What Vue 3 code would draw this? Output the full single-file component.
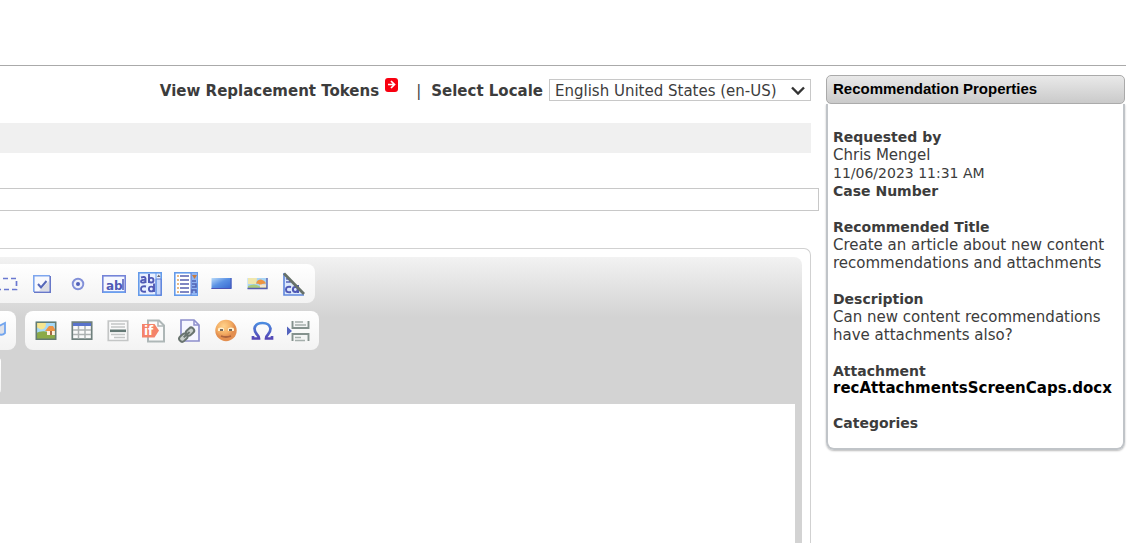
<script setup>
import { ref } from 'vue'

const locale = ref('en-US')
const title = ref('')
</script>

<template>
  <div class="page">
    <header class="masthead"></header>
    <div class="columns">
      <main class="article">
        <div class="topbar">
          <a class="tokens" href="#tokens">View Replacement Tokens</a>
          <svg class="go" viewBox="0 0 13 14" aria-hidden="true">
            <rect width="13" height="14" rx="3" fill="#f80010" />
            <path d="M3 6.500h6M6 3l3.500 3.500L6 10" fill="none" stroke="#fff" stroke-width="1.700" />
          </svg>
          <span class="bar">|</span>
          <label class="locale-label" for="locale">Select Locale</label>
          <div class="locale">
            <select id="locale" v-model="locale">
              <option value="en-US">English United States (en-US)</option>
            </select>
            <svg class="chevron" viewBox="0 0 14 9" aria-hidden="true">
              <path d="M1 1.500l6 6 6-6" fill="none" stroke="#333" stroke-width="2.400" />
            </svg>
          </div>
        </div>

        <div class="strip"></div>
        <input v-model="title" class="title-input" type="text" aria-label="Title" />

        <section class="editor">
          <div class="shell">
            <div class="toolbar">
              <div class="row">
                <div class="group group-forms">
                  <button type="button" aria-label="Form">
                    <svg viewBox="0 0 24 24"><path d="M1 6.500h21.500v11H1" fill="none" stroke="#6a78d0" stroke-width="1.700" stroke-dasharray="5 3" /></svg>
                  </button>
                  <button type="button" aria-label="Checkbox">
                    <svg viewBox="0 0 24 24">
                      <path d="M4 4h16v16H4z" fill="#f8f9fd" /><path d="M19 9v10H9z" fill="#dcdde2" />
                      <path d="M3.800 20V3.800H20" fill="none" stroke="#7ea6ee" stroke-width="1.600" />
                      <path d="M20.200 4v16.200H4" fill="none" stroke="#6878c8" stroke-width="1.600" />
                      <path d="M8 12l3 3.500L16.500 9" fill="none" stroke="#5567b8" stroke-width="2" />
                    </svg>
                  </button>
                  <button type="button" aria-label="Radio button">
                    <svg viewBox="0 0 24 24"><circle cx="12" cy="12" r="5.300" fill="#eef0fa" stroke="#8290d8" stroke-width="1.900" /><circle cx="12" cy="12" r="2" fill="#5060b8" /></svg>
                  </button>
                  <button type="button" aria-label="Text field">
                    <svg viewBox="0 0 24 24">
                      <rect x=".800" y="3.800" width="22.400" height="16.400" fill="#f6f8ff" stroke="#7484d8" stroke-width="1.600" />
                      <path d="M.800 20.200h22.400" stroke="#6aa0f0" stroke-width="1.600" />
                      <text class="glyph" x="4" y="17.500" font-size="12">ab</text><path d="M21 7v11" stroke="#4d58b8" stroke-width="1.500" />
                    </svg>
                  </button>
                  <button type="button" aria-label="Text area">
                    <svg viewBox="0 0 24 24">
                      <rect x=".800" y=".800" width="22.400" height="22.400" fill="#e9f0ff" stroke="#659bea" stroke-width="1.600" />
                      <path d="M18 7h5v16h-5z" fill="#c5d8fa" stroke="#5e78d4" /><path d="M18 1v22" stroke="#659bea" />
                      <path d="M19 5l1.700-2.500L22.500 5z" fill="#6a6a70" />
                      <g fill="none" stroke="#5059b5" stroke-width="1.900">
                        <path d="M3 5.500q4-1.500 4.500 1V11M7.500 8Q3 7.500 3 9.500t4.500.500" />
                        <path d="M11 2v9" /><circle cx="13.200" cy="8.200" r="2.300" />
                        <path d="M8 14.500q-5-1-5 2.500t5 2.500" />
                        <path d="M16 11.500V20" /><circle cx="13.300" cy="17" r="2.400" />
                      </g>
                    </svg>
                  </button>
                  <button type="button" aria-label="Selection field">
                    <svg viewBox="0 0 24 24">
                      <rect x=".800" y=".800" width="22.400" height="22.400" fill="#fff" stroke="#659bea" stroke-width="1.600" />
                      <path d="M17 1h6v22h-6z" fill="#8fb4f2" /><path d="M17 1v22" stroke="#5876cf" />
                      <path d="M3 4h2M3 8h2M3 12h2M3 16h2M3 20h2" stroke="#e0a35c" stroke-width="1.400" />
                      <path d="M6 4h9M6 8h9M6 12h9M6 16h9M6 20h9" stroke="#555fae" stroke-width="1.600" />
                      <path d="M18 3h5l-2.500 4z" fill="#c67a3d" /><path d="M18 9h4M18 12h4v3h-4M18 21v-3h4v3" fill="none" stroke="#5262b4" stroke-width="1.500" />
                    </svg>
                  </button>
                  <button type="button" aria-label="Button">
                    <svg viewBox="0 0 24 24">
                      <defs><linearGradient id="blueface" x1="0" y1="0" x2="1" y2="1"><stop stop-color="#b9dbfa" /><stop offset=".45" stop-color="#5a91e4" /><stop offset="1" stop-color="#3566d0" /></linearGradient></defs>
                      <path d="M1.500 6h20v11h-20z" fill="url(#blueface)" /><path d="M21 6v10.500H1.500" fill="none" stroke="#4b54b4" />
                    </svg>
                  </button>
                  <button type="button" aria-label="Image button">
                    <svg viewBox="0 0 24 24">
                      <path d="M1.500 6h20v11h-20z" fill="#a9d5f5" /><path d="M2 6h9l-1 6H2z" fill="#f0e7ad" />
                      <path d="M2 14q6-3 11 0t8-1v4H2z" fill="#a9cb7d" /><path d="M10 11.500q1-4 5-4 4 1 5 4l-4 .500-1 2-2-2z" fill="#ee9440" /><path d="M14 12.500h6v3h-6z" fill="#f7e5ca" />
                      <path d="M21 6v10.500H1.500" fill="none" stroke="#575cae" stroke-width="1.300" />
                    </svg>
                  </button>
                  <button type="button" aria-label="Hidden field">
                    <svg viewBox="0 0 24 24">
                      <path d="M2 1v22h20z" fill="#dce9fc" /><path d="M2 1v22h20" fill="none" stroke="#5f86dc" stroke-width="1.600" />
                      <path d="M4 7q4-1 4 3H4" fill="none" stroke="#5964b8" stroke-width="1.700" />
                      <g fill="none" stroke="#5059b5" stroke-width="2"><path d="M9 15q-5-1-5 2.500T9 20M16 13v8" /><circle cx="13.300" cy="17.500" r="2.400" /></g>
                      <path d="M2 1.500L22 22" stroke="#667069" stroke-width="2.800" />
                    </svg>
                  </button>
                </div>
              </div>

              <div class="row">
                <div class="group group-links">
                  <button type="button" aria-label="Anchor">
                    <svg viewBox="0 0 24 24"><path d="M10 5l6 2 6-3v10q-3 3-6 1l-6 2z" fill="#dfe1e8" stroke="#72a5ee" stroke-width="1.800" /></svg>
                  </button>
                </div>
                <div class="group">
                  <button type="button" aria-label="Image">
                    <svg viewBox="0 0 24 24">
                      <path d="M2 2.500h20v18H2z" fill="#a6daf8" /><path d="M2 14q7-4 20 1v5.500H2z" fill="#8baa48" /><path d="M3 3.500h9q0 7-5 7l-4-2z" fill="#f6e68f" />
                      <path d="M13 11h8v5h-8z" fill="#fff0dc" /><path d="M11 12l4-5h4l3 5z" fill="#ed9344" /><path d="M16 12h2v4h-2z" fill="#a46b45" />
                      <path d="M2.300 3.200h19.400v17H2.300z" fill="none" stroke="#647c72" stroke-width="1.600" />
                    </svg>
                  </button>
                  <button type="button" aria-label="Table">
                    <svg viewBox="0 0 24 24">
                      <path d="M2.300 3.200h19.400v17H2.300z" fill="#fafafa" stroke="#6f807d" stroke-width="1.700" /><path d="M3 4h18v3H3z" fill="#5973cc" />
                      <path d="M3 11h18M3 15.500h18M8.500 7v12.500M15 7v12.500" stroke="#adb2b2" stroke-width="1.500" />
                    </svg>
                  </button>
                  <button type="button" aria-label="Horizontal line">
                    <svg viewBox="0 0 24 24">
                      <path d="M2.300 2h19.400v19.500H2.300z" fill="#fafafa" stroke="#c4c6c6" stroke-width="1.700" /><path d="M5 5h14M5 8h14M5 15.500h14M8 18.500h11" stroke="#c4c6c6" stroke-width="1.400" />
                      <path d="M4 11.800h16" stroke="#647975" stroke-width="2.600" />
                    </svg>
                  </button>
                  <button type="button" aria-label="Condition">
                    <svg viewBox="0 0 24 24">
                      <path d="M6 1.500h11l5 5v16H6z" fill="#fafafa" stroke="#aeb7b7" stroke-width="2" /><path d="M16 2v5h6" fill="none" stroke="#aeb7b7" stroke-width="1.500" />
                      <path d="M0 5h12.500l4.500 6.500-4.500 7H0z" fill="#f4836a" /><text class="glyph-white" x="2" y="16" font-size="12">if</text>
                    </svg>
                  </button>
                  <button type="button" aria-label="Document link">
                    <svg viewBox="0 0 24 24">
                      <path d="M3 1h13l5 5v16H3z" fill="#f6f6ff" stroke="#8d8fcc" stroke-width="1.700" /><path d="M16 1.500V6h5" fill="none" stroke="#8d8fcc" stroke-width="1.500" />
                      <g transform="rotate(-42 9 16)" fill="#c9cfcc" stroke="#69746f" stroke-width="2"><rect x="0" y="12.500" width="9" height="6" rx="3" /><rect x="9" y="12.500" width="9" height="6" rx="3" /><path d="M5 15.500h8" /></g>
                    </svg>
                  </button>
                  <button type="button" aria-label="Smiley">
                    <svg viewBox="0 0 24 24">
                      <defs><radialGradient id="face" cx=".4" cy=".3"><stop stop-color="#ffd28b" /><stop offset=".7" stop-color="#f3ad63" /><stop offset="1" stop-color="#e38f50" /></radialGradient></defs>
                      <circle cx="12" cy="11.500" r="10.700" fill="url(#face)" /><path d="M4 9.500q3-2 6 0v2.500H4zM14 9.500q3-2 6 0v2.500h-6z" fill="#fff0cf" />
                      <path d="M6 10h3v2H6zM15 10h3v2h-3z" fill="#75695b" /><path d="M7 17q5 2 10 0" fill="none" stroke="#ad643d" stroke-width="1.800" />
                    </svg>
                  </button>
                  <button type="button" aria-label="Special character">
                    <svg viewBox="0 0 24 24">
                      <defs><linearGradient id="omega" x2="0" y2="1"><stop stop-color="#4b8be0" /><stop offset="1" stop-color="#5546b5" /></linearGradient></defs>
                      <path d="M3 17v2.500h6q0-2-2-4Q4.500 13 4.500 9.500 5.500 4 12.500 4t8 5.500q0 3.500-2.500 6-2 2-2 4h6V17" fill="none" stroke="url(#omega)" stroke-width="2.700" />
                    </svg>
                  </button>
                  <button type="button" aria-label="Page break">
                    <svg viewBox="0 0 24 24">
                      <path d="M6.500 2v7h16V2M6.500 22v-7h16v7" fill="#f4f5f5" stroke="#84918d" stroke-width="1.900" /><path d="M9 3h8M9 6h11M9 18.500h6M9 21.500h10" stroke="#a5afac" stroke-width="1.300" />
                      <path d="M1 7.500l5 4.500-5 4.500z" fill="#5363bd" />
                    </svg>
                  </button>
                </div>
              </div>

              <div class="row">
                <div class="group group-end"></div>
              </div>
            </div>
            <div class="canvas" role="textbox" aria-label="Article body" contenteditable="true"></div>
          </div>
        </section>
      </main>

      <aside class="panel">
        <h2>Recommendation Properties</h2>
        <div class="details">
          <section>
            <h3>Requested by</h3>
            <p>Chris Mengel</p>
            <p class="date">11/06/2023 11:31 AM</p>
            <h3>Case Number</h3>
          </section>
          <section>
            <h3>Recommended Title</h3>
            <p>Create an article about new content recommendations and attachments</p>
          </section>
          <section>
            <h3>Description</h3>
            <p>Can new content recommendations have attachments also?</p>
          </section>
          <section>
            <h3>Attachment</h3>
            <a href="#attachment">recAttachmentsScreenCaps.docx</a>
          </section>
          <section>
            <h3>Categories</h3>
          </section>
        </div>
      </aside>
    </div>
  </div>
</template>

<style>
body {
  margin: 0;
  background: #fff;
}
</style>

<style scoped>
.page {
  height: 100vh;
  overflow: hidden;
  display: flex;
  flex-direction: column;
  color: #3c3c3c;
  font-family: Verdana, "DejaVu Sans", sans-serif;
  font-size: 15px;
}
.page * {
  box-sizing: border-box;
}
.masthead {
  flex: none;
  height: 66px;
  margin-right: 13px;
  border-bottom: 1px solid #aaa;
}
.columns {
  flex: 1;
  min-height: 0;
  display: flex;
  gap: 7px;
  padding-right: 14px;
}
.article {
  flex: 1;
  min-width: 0;
  display: flex;
  flex-direction: column;
}
.topbar {
  display: flex;
  align-items: center;
  justify-content: flex-end;
  margin: 12px 8px 22px 0;
  white-space: nowrap;
}
.tokens,
.bar,
.locale-label {
  padding-top: 2px;
}
.tokens,
.locale-label {
  color: inherit;
  font-weight: bold;
  text-decoration: none;
}
.go {
  align-self: flex-start;
  width: 13px;
  height: 14px;
  margin-left: 6px;
}
.bar {
  margin: 0 10px 0 18px;
}
.locale {
  position: relative;
  margin-left: 6px;
  padding-top: 1px;
}
.locale select {
  display: block;
  width: 262px;
  height: 22px;
  padding: 2px 5px 0;
  border: 1px solid #c8c8c8;
  border-radius: 0;
  background: #fff;
  color: inherit;
  font: inherit;
  appearance: none;
}
.chevron {
  position: absolute;
  top: 8px;
  right: 6px;
  width: 14px;
  height: 9px;
  pointer-events: none;
}
.strip {
  height: 30px;
  margin-right: 8px;
  background: #f0f0f0;
}
.title-input {
  width: 100%;
  height: 23px;
  margin: 35px 0 37px;
  border: 1px solid #c8c8c8;
  border-left: 0;
}
.editor {
  flex: 1;
  display: flex;
  margin-right: 8px;
  padding: 8px 8px 0 0;
  border: 1px solid #d1d1d1;
  border-width: 1px 1px 0 0;
  border-top-right-radius: 7px;
}
.shell {
  flex: 1;
  display: flex;
  flex-direction: column;
  padding-right: 7px;
  border-top-right-radius: 8px;
  background: linear-gradient(#f2f2f2, #d3d3d3 60px);
}
.toolbar {
  display: flex;
  flex-direction: column;
  gap: 8px;
  padding: 7px 0 11px;
}
.row {
  display: flex;
  gap: 9px;
}
.group {
  display: flex;
  height: 39px;
  padding: 0 3px;
  border-radius: 8px;
  background: linear-gradient(#fff, #f3f3f3);
}
.group-forms {
  margin-left: -15px;
}
.group-links {
  margin-left: -26px;
}
.group-end {
  height: 35px;
  margin-left: -5px;
}
.group button {
  display: grid;
  place-items: center;
  width: 36px;
  padding: 0;
  border: 0;
  background: none;
}
.group svg {
  width: 24px;
  height: 24px;
}
.glyph,
.glyph-white {
  fill: #5059b5;
  font-family: "DejaVu Sans", sans-serif;
  font-weight: bold;
}
.glyph-white {
  fill: #fff;
}
.canvas {
  flex: 1;
  background: #fff;
  outline: 0;
}
.panel {
  flex: none;
  width: 299px;
  padding-top: 9px;
}
h2,
h3,
p {
  margin: 0;
}
h2 {
  height: 29px;
  padding: 0 6px;
  border: 1px solid #aaa;
  border-radius: 5px;
  background: linear-gradient(#e9e9e9, #cacaca);
  color: #000;
  font: bold 15px/25px Arial, "Liberation Sans", sans-serif;
}
.details {
  display: flex;
  flex-direction: column;
  gap: 18px;
  padding: 24px 5px 16px;
  border: 2px solid #c0c4c8;
  border-top: 0;
  border-radius: 0 0 8px 8px;
  box-shadow: 0 1px 2px #bbb;
}
.details h3,
.details .date {
  font-size: 14px;
  line-height: 18px;
}
.details p {
  font-size: 15px;
  line-height: 18px;
}
.details a {
  display: block;
  color: #000;
  font-weight: bold;
  line-height: 16px;
  text-decoration: none;
}
</style>
